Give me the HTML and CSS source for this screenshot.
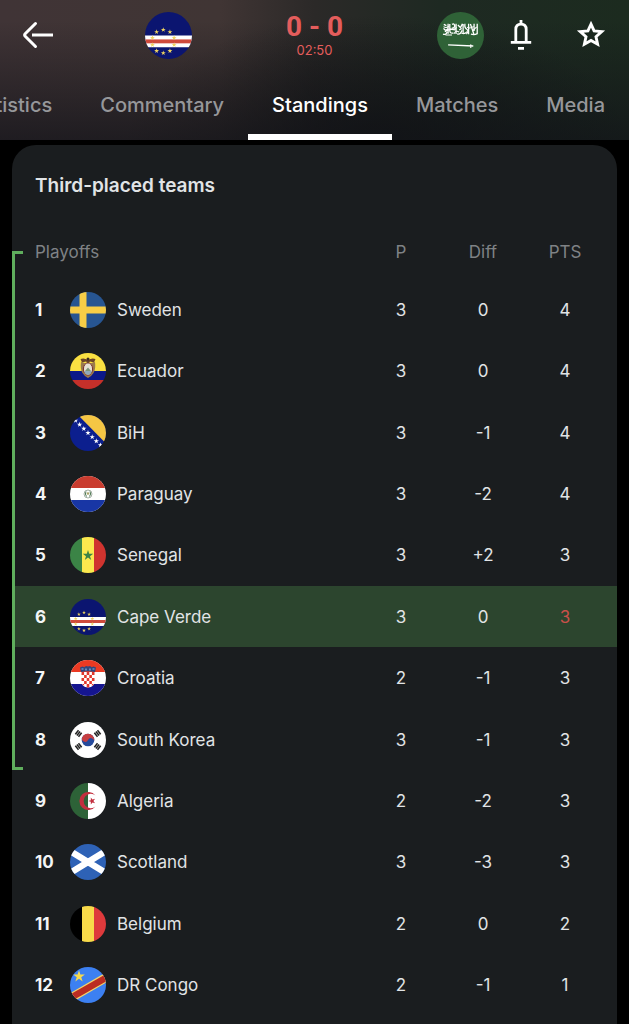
FILE: index.html
```html
<!DOCTYPE html>
<html lang="en">
<head>
<meta charset="utf-8">
<meta name="viewport" content="width=device-width, initial-scale=1">
<title>Standings</title>
<link rel="stylesheet" href="styles.css">
</head>
<body>
<svg class="defs" aria-hidden="true">
  <defs>
    <polygon id="star" points="0,-1 .224,-.309 .951,-.309 .363,.118 .588,.809 0,.382 -.588,.809 -.363,.118 -.951,-.309 -.224,-.309"/>
    <symbol id="cape-verde" viewBox="0 0 36 36">
      <rect width="36" height="36" fill="#0b1570"/>
      <rect y="18" width="36" height="9" fill="#fff"/>
      <rect y="21" width="36" height="3" fill="#cf4a3c"/>
      <g fill="#efd45f">
        <use href="#star" transform="translate(14 13.6) scale(2)"/>
        <use href="#star" transform="translate(19.1 15.3) scale(2)"/>
        <use href="#star" transform="translate(22.3 19.7) scale(2)"/>
        <use href="#star" transform="translate(22.3 25.1) scale(2)"/>
        <use href="#star" transform="translate(19.1 29.8) scale(2)"/>
        <use href="#star" transform="translate(14 31.4) scale(2)"/>
        <use href="#star" transform="translate(8.9 29.8) scale(2)"/>
        <use href="#star" transform="translate(5.7 25.1) scale(2)"/>
        <use href="#star" transform="translate(5.7 19.7) scale(2)"/>
        <use href="#star" transform="translate(8.9 15.3) scale(2)"/>
      </g>
    </symbol>
    <g id="bars">
      <path d="M-2.6 -2H2.6M-2.6 0H2.6M-2.6 2H2.6" stroke="#222" stroke-width="1.5"/>
    </g>
  </defs>
</svg>

<header class="match">
  <div class="match-bar">
    <button class="icon-button back" type="button" aria-label="Back">
      <svg width="32" height="28" viewBox="0 0 32 28" fill="none" stroke="#fff" stroke-width="3">
        <path d="M13.5 2.5L3.2 12.8Q2 14 3.2 15.2L13.5 25.5" stroke-linecap="round"/>
        <path d="M10 14H31"/>
      </svg>
    </button>
    <div class="scoreboard">
      <svg class="flag flag-large" role="img" aria-label="Cape Verde"><use href="#cape-verde"/></svg>
      <div class="score">
        <strong class="goals">0 - 0</strong>
        <span class="clock">02:50</span>
      </div>
      <svg class="flag flag-large" viewBox="0 0 36 36" role="img" aria-label="Saudi Arabia">
        <rect width="36" height="36" fill="#2f6237"/>
        <g fill="none" stroke="#fff" stroke-width="1">
          <path d="M4.6 17q2.600 .8 3-1.600M5 12.500q1.800 2.600 3.300 .3M5.200 9.500l2 1M8.500 9v7.600M9.800 9.200v5q0 2.600 2.800 1.800M11.500 9.500q1.800-1 2 1t-2.200 1.800M14.600 9v7.800M15.400 16.800q2.800 .6 3.600-2.800M16 10l2 2 1.500-3M17 13.800l2-1.200M20 9.200v7.400M21.400 9q-.5 3 1.400 4.200T22.500 17M24.200 9v8M25.600 9.200l2.600 7.600M28.400 9v5.500M30.800 9v8M26 17q2.600 .8 4.800-.4M6 15q4-2.600 8-1.300"/>
          <path d="M5 11.200q2 1.600 4-.4M10 12.800q3 1.400 5-1M13 16.600q1.600-3 4-1.200M18 15.800q3 1.800 5-.8M23 11.600q2.400 1.600 5-.6M27 14.600l3.400-3.200M6.500 17.600h5" stroke-width=".8"/>
        </g>
        <path d="M8.500 25.200L27.800 26.100M25.800 24.800v2.600" fill="none" stroke="#fff" stroke-width="1.100"/>
      </svg>
    </div>
    <div class="actions">
      <button class="icon-button" type="button" aria-label="Notifications">
        <svg width="24" height="32" viewBox="0 0 24 32" fill="none" stroke="#fff" stroke-width="2.800">
          <path d="M12 1V5M6.800 23V10.500Q6.800 5.200 12 5.200T17.200 10.500V23"/>
          <path d="M1.800 23.400H22.200M9 29.300H15"/>
        </svg>
      </button>
      <button class="icon-button" type="button" aria-label="Add to favourites">
        <svg width="32" height="32" viewBox="-16 -16 32 32" fill="none" stroke="#fff" stroke-width="2.900" stroke-miterlimit="8">
          <path d="M0 -10.900L3.100 -4.150 10.700 -3.400 5 1.700 6.600 9.200 0 5.400 -6.600 9.200 -5 1.700 -10.700 -3.400 -3.100 -4.150Z"/>
        </svg>
      </button>
    </div>
  </div>
  <nav class="tabs" aria-label="Match sections">
    <a class="tab" href="#statistics">Statistics</a>
    <a class="tab" href="#commentary">Commentary</a>
    <a class="tab tab-active" href="#standings" aria-current="page">Standings</a>
    <a class="tab" href="#matches">Matches</a>
    <a class="tab" href="#media">Media</a>
  </nav>
</header>

<main class="card" id="standings">
  <h1 class="card-title">Third-placed teams</h1>
  <table class="standings">
    <colgroup>
      <col class="col-rank"><col><col class="col-stat"><col class="col-stat"><col class="col-points">
    </colgroup>
    <thead>
      <tr><th class="group" colspan="2" scope="col">Playoffs</th><th scope="col">P</th><th scope="col">Diff</th><th class="points" scope="col">PTS</th></tr>
    </thead>
    <tbody class="playoffs">
      <tr>
        <td class="rank">1</td>
        <td><div class="team">
          <svg class="flag" viewBox="0 0 36 36" aria-hidden="true"><rect width="36" height="36" fill="#275591"/><path d="M13 0V36M0 18H36" stroke="#f7cd46" stroke-width="7"/></svg>
          Sweden</div></td>
        <td>3</td><td>0</td><td class="points">4</td>
      </tr>
      <tr>
        <td class="rank">2</td>
        <td><div class="team">
          <svg class="flag" viewBox="0 0 36 36" aria-hidden="true">
            <rect width="36" height="18" fill="#fae042"/><rect y="18" width="36" height="9" fill="#0b1889"/><rect y="27" width="36" height="9" fill="#c5302a"/>
            <path d="M11 9Q10 16 12.500 20Q15 24 18 25Q21 24 23.500 20Q26 16 25 9L18 11Z" fill="#9a7a4c"/>
            <ellipse cx="18" cy="16" rx="4.600" ry="6.200" fill="#e6e0d2" stroke="#7b2f28" stroke-width="1"/>
            <path d="M14 18H22Q21 21.500 18 22Q15 21.500 14 18Z" fill="#8fa9bb"/>
            <path d="M15 18L18 14.500L21 18Z" fill="#7d9478"/>
            <path d="M10.500 6Q14 4.500 18 7Q22 4.500 25.500 6L24 9.500L20 8.500L18 10.500L16 8.500L12 9.500Z" fill="#6b4428"/>
            <circle cx="18" cy="6" r="1.500" fill="#3e2b20"/>
          </svg>
          Ecuador</div></td>
        <td>3</td><td>0</td><td class="points">4</td>
      </tr>
      <tr>
        <td class="rank">3</td>
        <td><div class="team">
          <svg class="flag" viewBox="0 0 36 36" aria-hidden="true">
            <rect width="36" height="36" fill="#0c1f8e"/><path d="M8 0H36V28.500Z" fill="#f5c644"/>
            <g fill="#fff">
              <use href="#star" transform="translate(5.500 5.500) scale(2.800)"/>
              <use href="#star" transform="translate(9.600 9.600) scale(2.800)"/>
              <use href="#star" transform="translate(13.800 13.700) scale(2.800)"/>
              <use href="#star" transform="translate(18 17.900) scale(2.800)"/>
              <use href="#star" transform="translate(22.200 22) scale(2.800)"/>
              <use href="#star" transform="translate(26.300 26.100) scale(2.800)"/>
              <use href="#star" transform="translate(30.500 30.200) scale(2.800)"/>
            </g>
          </svg>
          BiH</div></td>
        <td>3</td><td>-1</td><td class="points">4</td>
      </tr>
      <tr>
        <td class="rank">4</td>
        <td><div class="team">
          <svg class="flag" viewBox="0 0 36 36" aria-hidden="true">
            <rect width="36" height="36" fill="#fff"/><rect width="36" height="12" fill="#c93c2f"/><rect y="24" width="36" height="12" fill="#1836a5"/>
            <circle cx="18" cy="18" r="4" fill="none" stroke="#8c9a8d" stroke-width=".8"/>
            <path d="M16 15.500Q14.500 18 16.500 20.500M20 15.500Q21.500 18 19.500 20.500" fill="none" stroke="#4f7a55" stroke-width="1"/>
            <circle cx="18" cy="17.500" r="1.300" fill="#a9a46a"/>
          </svg>
          Paraguay</div></td>
        <td>3</td><td>-2</td><td class="points">4</td>
      </tr>
      <tr>
        <td class="rank">5</td>
        <td><div class="team">
          <svg class="flag" viewBox="0 0 36 36" aria-hidden="true">
            <rect width="12" height="36" fill="#3b8446"/><rect x="12" width="12" height="36" fill="#fbe94e"/><rect x="24" width="12" height="36" fill="#d0342f"/>
            <use href="#star" transform="translate(18 18.500) scale(5.500)" fill="#3b8446"/>
          </svg>
          Senegal</div></td>
        <td>3</td><td>+2</td><td class="points">3</td>
      </tr>
      <tr class="current">
        <td class="rank">6</td>
        <td><div class="team">
          <svg class="flag" aria-hidden="true"><use href="#cape-verde"/></svg>
          Cape Verde</div></td>
        <td>3</td><td>0</td><td class="points live">3</td>
      </tr>
      <tr>
        <td class="rank">7</td>
        <td><div class="team">
          <svg class="flag" viewBox="0 0 36 36" aria-hidden="true">
            <rect width="36" height="36" fill="#fff"/><rect width="36" height="12" fill="#ea3a23"/><rect y="24" width="36" height="12" fill="#15158f"/>
            <path d="M11.500 12H24.500V21Q24.500 27 18 27.500Q11.500 27 11.500 21Z" fill="#fff"/>
            <path d="M11.500 12h2.600v3h-2.600zM16.700 12h2.600v3h-2.600zM21.900 12h2.600v3h-2.600zM14.100 15h2.600v3h-2.600zM19.300 15h2.600v3h-2.600zM11.500 18h2.600v3h-2.600zM16.700 18h2.600v3h-2.600zM21.900 18h2.600v3h-2.600zM14.100 21h2.600v3h-2.600zM19.300 21h2.600v3h-2.600zM12 24h2.100v1.800zM16.700 24h2.600v3.400h-2.600zM21.900 24h2.100l-2.100 2z" fill="#e2382c"/>
            <path d="M11 12L10 7.500L12.500 6.500L14.200 7.200L16 6L18 6.500L20 6L21.800 7.200L23.500 6.500L26 7.500L25 12Q18 10.500 11 12Z" fill="#30477f"/>
            <path d="M11.500 9h2M16 8.500v2M20 8.500v2M22.500 9h2" stroke="#8eb6dc" stroke-width="1.200"/>
          </svg>
          Croatia</div></td>
        <td>2</td><td>-1</td><td class="points">3</td>
      </tr>
      <tr>
        <td class="rank">8</td>
        <td><div class="team">
          <svg class="flag" viewBox="0 0 36 36" aria-hidden="true">
            <rect width="36" height="36" fill="#fff"/>
            <circle cx="18" cy="18" r="6.300" fill="#254a9c"/>
            <path d="M11.700 18A6.300 6.300 0 0 1 24.300 18A3.150 3.150 0 0 0 18 18A3.150 3.150 0 0 1 11.700 18Z" transform="rotate(25 18 18)" fill="#c63e42"/>
            <use href="#bars" transform="translate(8.500 11.500) rotate(-52)"/>
            <use href="#bars" transform="translate(27.500 11.500) rotate(52)"/>
            <use href="#bars" transform="translate(8.500 24.500) rotate(52)"/>
            <use href="#bars" transform="translate(27.500 24.500) rotate(-52)"/>
          </svg>
          South Korea</div></td>
        <td>3</td><td>-1</td><td class="points">3</td>
      </tr>
    </tbody>
    <tbody>
      <tr>
        <td class="rank">9</td>
        <td><div class="team">
          <svg class="flag" viewBox="0 0 36 36" aria-hidden="true">
            <rect width="18" height="36" fill="#2d6237"/><rect x="18" width="18" height="36" fill="#fff"/>
            <path d="M25.500 12.500A9 9 0 1 0 25.500 23.500A7.200 7.200 0 1 1 25.500 12.500Z" fill="#c22f3e"/>
            <use href="#star" transform="translate(22 18) rotate(-18) scale(3.800)" fill="#c22f3e"/>
          </svg>
          Algeria</div></td>
        <td>2</td><td>-2</td><td class="points">3</td>
      </tr>
      <tr>
        <td class="rank">10</td>
        <td><div class="team">
          <svg class="flag" viewBox="0 0 36 36" aria-hidden="true"><rect width="36" height="36" fill="#2e62b6"/><path d="M0 7L36 29M36 7L0 29" stroke="#fff" stroke-width="6.500"/></svg>
          Scotland</div></td>
        <td>3</td><td>-3</td><td class="points">3</td>
      </tr>
      <tr>
        <td class="rank">11</td>
        <td><div class="team">
          <svg class="flag" viewBox="0 0 36 36" aria-hidden="true"><rect width="12" height="36" fill="#000"/><rect x="12" width="12" height="36" fill="#f8da4a"/><rect x="24" width="12" height="36" fill="#de3a3c"/></svg>
          Belgium</div></td>
        <td>2</td><td>0</td><td class="points">2</td>
      </tr>
      <tr>
        <td class="rank">12</td>
        <td><div class="team">
          <svg class="flag" viewBox="0 0 36 36" aria-hidden="true">
            <rect width="36" height="36" fill="#3c80f2"/>
            <path d="M-2 32.500L38 9.500" stroke="#f3d36a" stroke-width="9"/><path d="M-2 32.500L38 9.500" stroke="#bb2c22" stroke-width="6.500"/>
            <use href="#star" transform="translate(9 9.500) scale(6.200)" fill="#f5d94f"/>
          </svg>
          DR Congo</div></td>
        <td>2</td><td>-1</td><td class="points">1</td>
      </tr>
    </tbody>
  </table>
</main>
</body>
</html>
```

FILE: styles.css
```css
*,
*::before {
  box-sizing: border-box;
}

body {
  display: flex;
  flex-direction: column;
  min-height: 100vh;
  margin: 0;
  background: #000;
  color: #e1e4e6;
  font-family: Inter, Roboto, "Liberation Sans", sans-serif;
  font-size: 17px;
  line-height: 24px;
}

.defs {
  position: absolute;
  width: 0;
  height: 0;
}

.match {
  background:
    linear-gradient(to bottom, rgba(17, 18, 24, 0) 15%, rgba(17, 18, 24, 0.7) 100%),
    radial-gradient(ellipse 40% 90% at 60% 100%, rgba(14, 16, 15, 0.7), rgba(14, 16, 15, 0)),
    linear-gradient(to right, #403436 0%, #403534 35%, #2b2928 50%, #1e2922 70%, #1c2b1f 100%);
}

.match-bar {
  display: grid;
  grid-template-columns: 1fr auto 1fr;
  align-items: center;
  height: 70px;
}

.icon-button {
  display: flex;
  align-items: center;
  justify-content: center;
  width: 56px;
  height: 48px;
  padding: 0;
  border: 0;
  background: none;
  cursor: pointer;
}

.back {
  margin-left: 10px;
}

.scoreboard {
  display: flex;
  align-items: center;
  justify-content: center;
  gap: 94px;
}

.score {
  display: flex;
  flex-direction: column;
  align-items: center;
  min-width: 56px;
  color: #e45d5c;
}

.goals {
  font-family: Roboto, Inter, sans-serif;
  font-size: 28px;
  line-height: 30px;
  white-space: nowrap;
}

.clock {
  font-size: 13px;
  line-height: 16px;
}

.actions {
  display: flex;
  justify-content: flex-end;
  gap: 14px;
  padding-right: 10px;
}

.flag {
  flex: none;
  width: 36px;
  height: 36px;
  border-radius: 50%;
}

.flag-large {
  width: 47px;
  height: 47px;
}

.tabs {
  display: flex;
  justify-content: flex-end;
  height: 70px;
  overflow: hidden;
}

.tab {
  display: flex;
  flex: none;
  align-items: center;
  padding: 6px 24px 0;
  border-bottom: 6px solid transparent;
  color: #96979a;
  font-size: 20px;
  font-weight: 500;
  text-decoration: none;
}

.tab-active {
  border-bottom-color: #fff;
  color: #fff;
}

.card {
  display: flex;
  flex: 1;
  flex-direction: column;
  margin: 5px 12px 0;
  padding: 29px 0 8px;
  border-radius: 24px 24px 0 0;
  background: #1a1d1f;
}

.card-title {
  margin: 0 0 27px;
  padding: 0 23px;
  font-size: 19px;
  font-weight: 600;
  line-height: 24px;
}

.standings {
  flex: 1;
  width: 100%;
  border-collapse: collapse;
  table-layout: fixed;
  text-align: center;
}

.col-rank {
  width: 58px;
}

.col-stat {
  width: 82px;
}

.col-points {
  width: 93px;
}

th,
td {
  padding: 0;
}

th {
  height: 54px;
  color: #7f8285;
  font-weight: 400;
}

td {
  padding: 12px 0;
}

td:nth-child(2) {
  text-align: left;
}

.group,
.rank {
  padding-left: 23px;
  text-align: left;
}

.rank {
  color: #f3f5f6;
  font-weight: 700;
}

.points {
  padding-right: 11px;
}

.team {
  display: flex;
  align-items: center;
  gap: 11px;
}

.playoffs {
  position: relative;
}

.playoffs::before {
  position: absolute;
  top: -28px;
  bottom: 0;
  left: 0;
  width: 11px;
  border: 3px solid #5fae5d;
  border-right: 0;
  content: "";
}

.current {
  background: #2c452e;
}

.live {
  color: #c9504a;
}
```
